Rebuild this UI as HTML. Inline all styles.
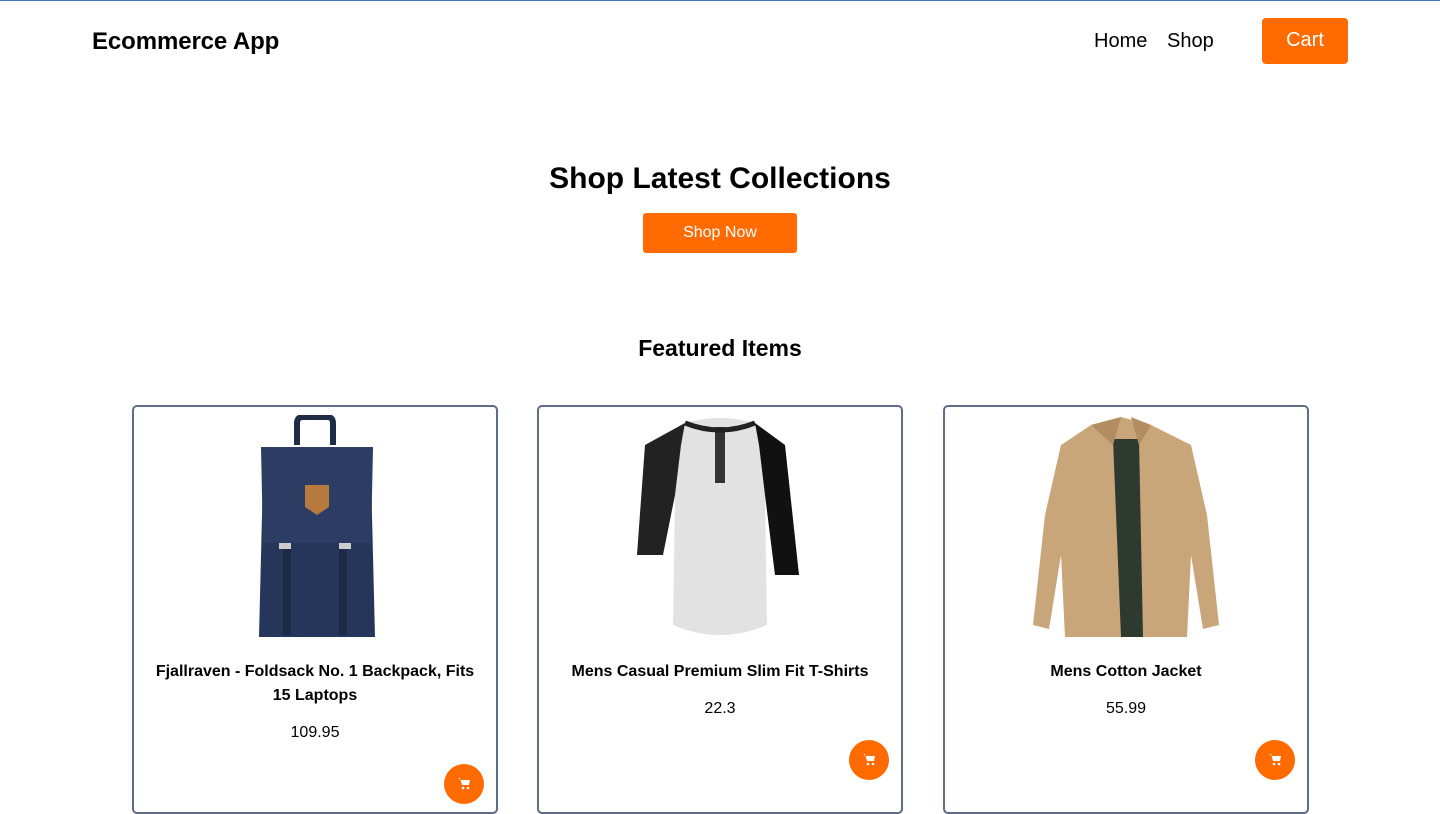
<!DOCTYPE html>
<html><head><meta charset="utf-8"><style>
*{box-sizing:border-box;margin:0;padding:0}
body{width:1440px;height:814px;overflow:hidden;background:#fff;font-family:"Liberation Sans",Arial,sans-serif;color:#000;position:relative}
.top{position:absolute;left:0;top:0;width:1440px;height:1px;background:#3b78c2}
.logo{position:absolute;left:92px;top:28px;font-size:24px;font-weight:bold;letter-spacing:-0.1px}
.nav{position:absolute;top:30px;font-size:20px}
.cart{position:absolute;left:1262px;top:18px;width:86px;height:46px;background:#ff6b00;color:#fff;border-radius:4px;font-size:20px;text-align:center;line-height:45px}
h1{position:absolute;left:0;width:1440px;top:162px;text-align:center;font-size:30px}
.shop{position:absolute;left:643px;top:213px;width:154px;height:40px;background:#ff6b00;color:#fff;border-radius:3px;font-size:16px;text-align:center;line-height:40px}
h2{position:absolute;left:0;width:1440px;top:335px;text-align:center;font-size:23px}
.card{position:absolute;top:405px;width:366px;height:409px;border:2px solid #5e6d85;border-radius:5px;text-align:center}
.card svg{position:absolute;left:50%;transform:translateX(-50%);top:8px}
.t{position:absolute;top:253px;left:15px;right:15px;font-weight:bold;font-size:16px;line-height:24px}
.p{position:absolute;left:0;right:0;font-size:16px}
.b{position:absolute;right:12px;width:40px;height:40px;border-radius:50%;background:#ff6b00}
.b svg{top:13px}
</style></head><body>
<div class="top"></div>
<div class="logo">Ecommerce App</div>
<div class="nav" style="left:1094px">Home</div>
<div class="nav" style="left:1167px">Shop</div>
<div class="cart">Cart</div>
<h1>Shop Latest Collections</h1>
<div class="shop">Shop Now</div>
<h2>Featured Items</h2>

<div class="card" style="left:132px">
<svg width="160" height="228" viewBox="0 0 160 228"><path d="M62 30 V8 Q62 2 68 2 H92 Q98 2 98 8 V30" fill="none" stroke="#1f2c45" stroke-width="6"/><path d="M26 32 H138 L136 60 L140 222 H24 L28 60 Z" fill="#26355a"/><path d="M26 32 H138 L136 128 H28 Z" fill="#2c3c63"/><path d="M70 70 H94 V92 L82 100 L70 92 Z" fill="#b67a3e"/><rect x="48" y="130" width="8" height="90" fill="#1c2947"/><rect x="104" y="130" width="8" height="90" fill="#1c2947"/><rect x="44" y="128" width="12" height="6" fill="#ccc"/><rect x="104" y="128" width="12" height="6" fill="#ccc"/></svg>
<div class="t">Fjallraven - Foldsack No. 1 Backpack, Fits 15 Laptops</div>
<div class="p" style="top:317px">109.95</div>
<div class="b" style="top:357px"><svg width="14" height="13" viewBox="0 0 14 13"><path d="M1 1h2l2 7h7l1-5H4" fill="#fff"/><circle cx="6" cy="11" r="1.3" fill="#fff"/><circle cx="11" cy="11" r="1.3" fill="#fff"/></svg></div>
</div>

<div class="card" style="left:537px">
<svg width="170" height="228" viewBox="0 0 170 228"><path d="M50 8 Q85 -2 120 8 L150 30 L164 160 L140 160 L130 80 L132 210 Q85 230 38 210 L40 80 L28 140 L2 140 L10 30 Z" fill="#e2e2e2"/><path d="M50 8 L10 30 L2 140 L28 140 L40 80 L46 30 Z" fill="#222"/><path d="M120 8 L150 30 L164 160 L140 160 L130 80 L124 30 Z" fill="#111"/><rect x="80" y="12" width="10" height="56" fill="#333"/><path d="M50 8 Q85 22 120 8" fill="none" stroke="#222" stroke-width="5"/></svg>
<div class="t">Mens Casual Premium Slim Fit T-Shirts</div>
<div class="p" style="top:293px">22.3</div>
<div class="b" style="top:333px"><svg width="14" height="13" viewBox="0 0 14 13"><path d="M1 1h2l2 7h7l1-5H4" fill="#fff"/><circle cx="6" cy="11" r="1.3" fill="#fff"/><circle cx="11" cy="11" r="1.3" fill="#fff"/></svg></div>
</div>

<div class="card" style="left:943px">
<svg width="210" height="228" viewBox="0 0 210 228"><path d="M70 10 L100 2 L130 10 L170 30 L186 100 L198 210 L182 214 L170 140 L166 222 H44 L40 140 L28 214 L12 210 L24 100 L40 30 Z" fill="#c9a57a"/><path d="M92 24 H118 L122 222 H100 Z" fill="#2e3a30"/><path d="M70 10 L92 30 L100 2 Z M130 10 L118 30 L110 2 Z" fill="#b38d62"/></svg>
<div class="t">Mens Cotton Jacket</div>
<div class="p" style="top:293px">55.99</div>
<div class="b" style="top:333px"><svg width="14" height="13" viewBox="0 0 14 13"><path d="M1 1h2l2 7h7l1-5H4" fill="#fff"/><circle cx="6" cy="11" r="1.3" fill="#fff"/><circle cx="11" cy="11" r="1.3" fill="#fff"/></svg></div>
</div>
</body></html>
